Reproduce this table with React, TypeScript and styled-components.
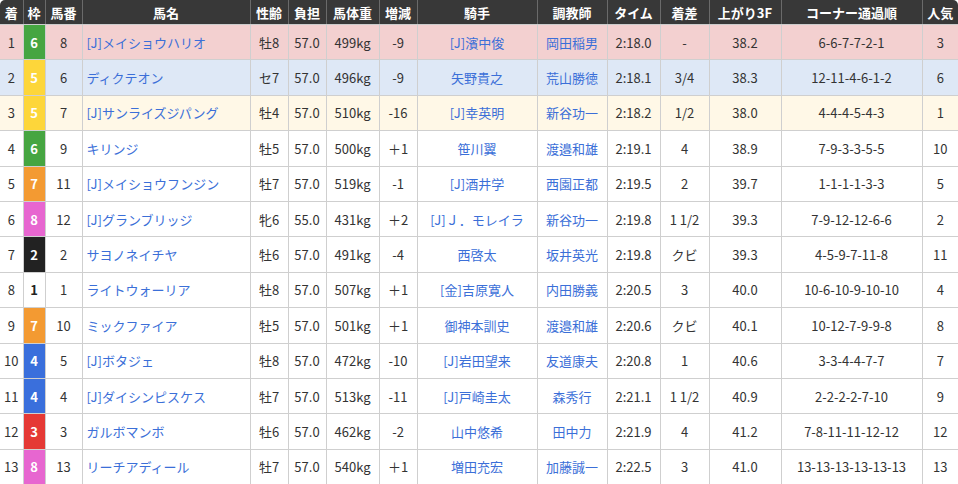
import * as React from "react";
import styled, { createGlobalStyle } from "styled-components";

const GlobalStyle = createGlobalStyle`
  html, body {
    margin: 0;
    padding: 0;
    background: #fff;
  }
  body {
    font-family: "Noto Sans CJK JP", "Noto Sans", sans-serif;
    color: #333;
  }
`;

interface IRace {
    rank: string;
    frame: number;
    num: string;
    horse: string;
    sexAge: string;
    weight: string;
    body: string;
    diff: string;
    jockey: string;
    trainer: string;
    time: string;
    margin: string;
    last3f: string;
    corners: string;
    pop: string;
}

const rows: IRace[] = [
    { rank: "1", frame: 6, num: "8", horse: "[J]メイショウハリオ", sexAge: "牡8", weight: "57.0", body: "499kg", diff: "-9", jockey: "[J]濱中俊", trainer: "岡田稲男", time: "2:18.0", margin: "-", last3f: "38.2", corners: "6-6-7-7-2-1", pop: "3" },
    { rank: "2", frame: 5, num: "6", horse: "ディクテオン", sexAge: "セ7", weight: "57.0", body: "496kg", diff: "-9", jockey: "矢野貴之", trainer: "荒山勝徳", time: "2:18.1", margin: "3/4", last3f: "38.3", corners: "12-11-4-6-1-2", pop: "6" },
    { rank: "3", frame: 5, num: "7", horse: "[J]サンライズジパング", sexAge: "牡4", weight: "57.0", body: "510kg", diff: "-16", jockey: "[J]幸英明", trainer: "新谷功一", time: "2:18.2", margin: "1/2", last3f: "38.0", corners: "4-4-4-5-4-3", pop: "1" },
    { rank: "4", frame: 6, num: "9", horse: "キリンジ", sexAge: "牡5", weight: "57.0", body: "500kg", diff: "＋1", jockey: "笹川翼", trainer: "渡邉和雄", time: "2:19.1", margin: "4", last3f: "38.9", corners: "7-9-3-3-5-5", pop: "10" },
    { rank: "5", frame: 7, num: "11", horse: "[J]メイショウフンジン", sexAge: "牡7", weight: "57.0", body: "519kg", diff: "-1", jockey: "[J]酒井学", trainer: "西園正都", time: "2:19.5", margin: "2", last3f: "39.7", corners: "1-1-1-1-3-3", pop: "5" },
    { rank: "6", frame: 8, num: "12", horse: "[J]グランブリッジ", sexAge: "牝6", weight: "55.0", body: "431kg", diff: "＋2", jockey: "[J]Ｊ．モレイラ", trainer: "新谷功一", time: "2:19.8", margin: "1 1/2", last3f: "39.3", corners: "7-9-12-12-6-6", pop: "2" },
    { rank: "7", frame: 2, num: "2", horse: "サヨノネイチヤ", sexAge: "牡6", weight: "57.0", body: "491kg", diff: "-4", jockey: "西啓太", trainer: "坂井英光", time: "2:19.8", margin: "クビ", last3f: "39.3", corners: "4-5-9-7-11-8", pop: "11" },
    { rank: "8", frame: 1, num: "1", horse: "ライトウォーリア", sexAge: "牡8", weight: "57.0", body: "507kg", diff: "＋1", jockey: "[金]吉原寛人", trainer: "内田勝義", time: "2:20.5", margin: "3", last3f: "40.0", corners: "10-6-10-9-10-10", pop: "4" },
    { rank: "9", frame: 7, num: "10", horse: "ミックファイア", sexAge: "牡5", weight: "57.0", body: "501kg", diff: "＋1", jockey: "御神本訓史", trainer: "渡邉和雄", time: "2:20.6", margin: "クビ", last3f: "40.1", corners: "10-12-7-9-9-8", pop: "8" },
    { rank: "10", frame: 4, num: "5", horse: "[J]ボタジェ", sexAge: "牡8", weight: "57.0", body: "472kg", diff: "-10", jockey: "[J]岩田望来", trainer: "友道康夫", time: "2:20.8", margin: "1", last3f: "40.6", corners: "3-3-4-4-7-7", pop: "7" },
    { rank: "11", frame: 4, num: "4", horse: "[J]ダイシンピスケス", sexAge: "牡7", weight: "57.0", body: "513kg", diff: "-11", jockey: "[J]戸崎圭太", trainer: "森秀行", time: "2:21.1", margin: "1 1/2", last3f: "40.9", corners: "2-2-2-2-7-10", pop: "9" },
    { rank: "12", frame: 3, num: "3", horse: "ガルボマンボ", sexAge: "牡6", weight: "57.0", body: "462kg", diff: "-2", jockey: "山中悠希", trainer: "田中力", time: "2:21.9", margin: "4", last3f: "41.2", corners: "7-8-11-11-12-12", pop: "12" },
    { rank: "13", frame: 8, num: "13", horse: "リーチアディール", sexAge: "牡7", weight: "57.0", body: "540kg", diff: "＋1", jockey: "増田充宏", trainer: "加藤誠一", time: "2:22.5", margin: "3", last3f: "41.0", corners: "13-13-13-13-13-13", pop: "13" },
];

const headers = ["着", "枠", "馬番", "馬名", "性齢", "負担", "馬体重", "増減", "騎手", "調教師", "タイム", "着差", "上がり3F", "コーナー通過順", "人気"];
const widths = [23, 22, 37, 168, 38, 38, 53, 38, 120, 70, 53, 49, 72, 141, 36];

const frameColors: { [k: number]: [string, string] } = {
    1: ["#ffffff", "#222222"],
    2: ["#222222", "#ffffff"],
    3: ["#e53935", "#ffffff"],
    4: ["#3a6fdc", "#ffffff"],
    5: ["#fdd63a", "#ffffff"],
    6: ["#46a541", "#ffffff"],
    7: ["#f39a32", "#ffffff"],
    8: ["#e766d0", "#ffffff"],
};

const rankBg = ["#f3d0d0", "#dee8f6", "#fff8e7"];

const Card = styled.div`
  width: 958px;
  height: 484px;
  overflow: hidden;
  border-radius: 5px;
`;

const Table = styled.table`
  width: 958px;
  border-collapse: collapse;
  table-layout: fixed;
  font-size: 13px;
`;

const HeadCell = styled.th`
  height: 24px;
  padding: 0;
  background: #383838;
  color: #fff;
  font-weight: bold;
  font-size: 13px;
  text-align: center;
  white-space: nowrap;
  border-left: 1px solid #6a6a6a;
  border-bottom: 1px solid #ccc;
  &:first-child {
    border-left: none;
  }
`;

const Row = styled.tr<{ bg: string }>`
  height: 35.4px;
  background: ${(p) => p.bg};
`;

const Cell = styled.td<{ left?: boolean }>`
  padding: 0 ${(p) => (p.left ? "4px" : "2px")};
  text-align: ${(p) => (p.left ? "left" : "center")};
  border: 1px solid #cfcfcf;
  white-space: nowrap;
  overflow: hidden;
  color: #333;
  &:first-child {
    border-left: none;
  }
  &:last-child {
    border-right: none;
  }
`;

const FrameCell = styled.td<{ frame: number }>`
  padding: 0;
  text-align: center;
  font-weight: bold;
  border: 1px solid #cfcfcf;
  background: ${(p) => frameColors[p.frame][0]};
  color: ${(p) => frameColors[p.frame][1]};
`;

const Link = styled.span`
  color: #3b6fd8;
`;

export default function App() {
    return (
        <React.Fragment>
            <GlobalStyle />
            <Card>
                <Table>
                    <colgroup>
                        {widths.map((w, i) => <col key={i} style={{ width: w }} />)}
                    </colgroup>
                    <thead>
                        <tr>
                            {headers.map((h) => <HeadCell key={h}>{h}</HeadCell>)}
                        </tr>
                    </thead>
                    <tbody>
                        {rows.map((r, i) => (
                            <Row key={r.rank} bg={rankBg[i] || "#fff"}>
                                <Cell>{r.rank}</Cell>
                                <FrameCell frame={r.frame}>{r.frame}</FrameCell>
                                <Cell>{r.num}</Cell>
                                <Cell left={true}><Link>{r.horse}</Link></Cell>
                                <Cell>{r.sexAge}</Cell>
                                <Cell>{r.weight}</Cell>
                                <Cell>{r.body}</Cell>
                                <Cell>{r.diff}</Cell>
                                <Cell><Link>{r.jockey}</Link></Cell>
                                <Cell><Link>{r.trainer}</Link></Cell>
                                <Cell>{r.time}</Cell>
                                <Cell>{r.margin}</Cell>
                                <Cell>{r.last3f}</Cell>
                                <Cell>{r.corners}</Cell>
                                <Cell>{r.pop}</Cell>
                            </Row>
                        ))}
                    </tbody>
                </Table>
            </Card>
        </React.Fragment>
    );
}
